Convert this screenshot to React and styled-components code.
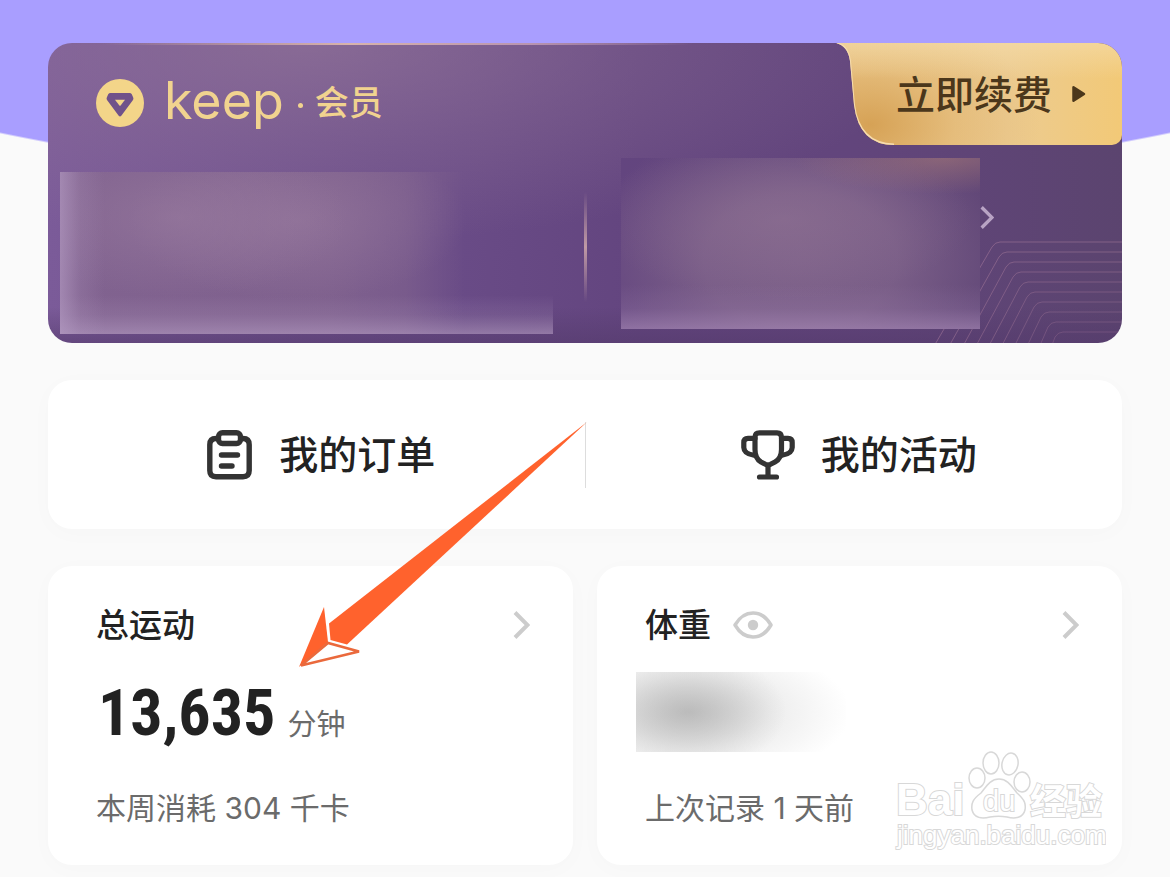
import styled, { createGlobalStyle } from "styled-components"

const COLORS = {
    page: "#fafafa",
    sky: "#a99eff",
    purple: "#63457f",
    gold: "#f1d38f",
    ink: "#222222",
    icon: "#333333",
    grey: "#6b6b6b",
    light_grey: "#cccccc",
    orange: "#ff622d",
}

const GlobalStyle = createGlobalStyle`
* {
    box-sizing: border-box;
}
body {
    margin: 0;
    background: ${COLORS.page};
    color: ${COLORS.ink};
    font-family: Inter, "Noto Sans CJK SC", sans-serif;
}
`

const MemberBadge = () => (
    <svg width="48" height="48" viewBox="0 0 48 48" aria-hidden="true">
        <circle cx="24" cy="24" r="24" fill="#f3d589" />
        <path
            d="M14.500 14H33.500Q35 14 35.800 15.200L37.200 18.500Q37.800 19.800 37 21L25.300 36.800Q24 38.400 22.700 36.800L11 21Q10.200 19.800 10.800 18.500L12.200 15.200Q13 14 14.500 14Z"
            fill="#70528a"
        />
        <path d="M19 20.800H29L24.600 26.500Q24 27.200 23.400 26.500Z" fill="#f3d589" />
    </svg>
)

const ChevronIcon = ({ width = 17, height = 28, color = COLORS.light_grey, stroke = 4 }) => (
    <svg width={width} height={height} viewBox="0 0 17 28" aria-hidden="true">
        <path d="M2 1.500L14.500 14L2 26.500" fill="none" stroke={color} strokeWidth={stroke} />
    </svg>
)

const OrderIcon = () => (
    <svg width="46" height="50" viewBox="0 0 46 50" fill="none" stroke={COLORS.icon} strokeWidth="5.400" strokeLinecap="round" strokeLinejoin="round" aria-hidden="true">
        <path d="M10.500 8.500H9Q2.800 8.500 2.800 14.700V40.500Q2.800 46.700 9 46.700H36Q42.200 46.700 42.200 40.500V14.700Q42.200 8.500 36 8.500H34.500" />
        <rect x="11.500" y="2.800" width="22" height="10.700" rx="4" />
        <path d="M14.500 25H30.500M14.500 36H25" />
    </svg>
)

const TrophyIcon = () => (
    <svg width="54" height="50" viewBox="0 0 54 50" fill="none" stroke={COLORS.icon} strokeWidth="5.200" strokeLinecap="round" strokeLinejoin="round" aria-hidden="true">
        <path d="M18.500 2.800H36Q40.500 2.800 40.500 7.500V19.500Q40.500 28.500 34 32L29.500 34.300Q27 35.300 24.500 34.300L20 32Q14 28.500 14 19.500V7.500Q14 2.800 18.500 2.800Z" />
        <path d="M14 8.300H7Q2.800 8.300 2.800 12.500V17.500Q3 23.800 13 25.300M40.500 8.300H47Q51.200 8.300 51.200 12.500V17.500Q51 23.800 41 25.300M27 36V46M18.500 47H35.500" />
    </svg>
)

const EyeIcon = () => (
    <svg width="40" height="28" viewBox="0 0 40 28" aria-hidden="true">
        <path d="M2 14Q9 2 20 2T38 14Q31 26 20 26T2 14Z" fill="none" stroke={COLORS.light_grey} strokeWidth="3.500" strokeLinejoin="round" />
        <circle cx="20" cy="14" r="5.200" fill={COLORS.light_grey} />
    </svg>
)

const PlayIcon = () => (
    <svg width="14" height="18" viewBox="0 0 14 18" aria-hidden="true">
        <path d="M1.500 2.200V15.800L12 9Z" fill="#4b371b" stroke="#4b371b" strokeWidth="2.500" strokeLinejoin="round" />
    </svg>
)

const lineRows = [0, 1, 2, 3, 4, 5, 6, 7, 8, 9]

const CardLines = () => (
    <LinesSvg width="192" height="102" viewBox="0 0 192 102" fill="none" stroke="#a5799a" strokeWidth="1" aria-hidden="true">
        {lineRows.map((row) => (
            <path
                key={row}
                opacity={0.55 - row * 0.025}
                d={`M192 ${1 + row * 10}H${70 + row * 7}q-5 0 -8 5L${row * 13} ${row < 2 ? 112 + row * 4 : 118}`}
            />
        ))}
    </LinesSvg>
)

const TabEdge = () => (
    <EdgeSvg width="70" height="102" viewBox="0 0 70 102" fill="none" aria-hidden="true">
        <path d="M1 0Q12 3 14 18L18 62Q23 101 58 101.500" stroke="#f6dcae" strokeWidth="2" />
    </EdgeSvg>
)

const PointerArrow = () => (
    <ArrowSvg width="300" height="255" viewBox="290 415 300 255" aria-hidden="true">
        <path d="M587 422L329 623.500L330.500 640L347 644.500Z" fill={COLORS.orange} />
        <path d="M324 607L299 667L328 642Z" fill={COLORS.orange} />
        <path d="M328 643L301 665.500L359 651.500Z" fill="#ffffff" stroke="#ea693c" strokeWidth="2.500" />
    </ArrowSvg>
)

const Watermark = () => (
    <WatermarkSvg width="212" height="104" viewBox="0 0 212 104" aria-hidden="true">
        <g fill="#ffffff" stroke="#d8d8d8" strokeWidth="1.500">
            <ellipse cx="83" cy="28" rx="8" ry="10" />
            <ellipse cx="97" cy="13" rx="8" ry="11" />
            <ellipse cx="116" cy="14" rx="8" ry="11" transform="rotate(12 116 14)" />
            <ellipse cx="128" cy="32" rx="8" ry="10" />
            <path d="M105 29C114 29 118 37 123 43C131 50 132 54 131 60C129 68 121 69 113 67C107 66 102 66 96 67C88 69 80 68 78 60C77 53 79 49 87 43C92 37 96 29 105 29Z" />
        </g>
        <g fill="#ffffff" stroke="#d8d8d8" strokeWidth="2" paintOrder="stroke" fontFamily="'Liberation Sans', 'Noto Sans CJK SC', sans-serif">
            <text x="2" y="65" fontSize="44" fontWeight="700">Bai</text>
            <text x="89" y="61" fontSize="29">du</text>
            <text x="136" y="65" fontSize="36" fontWeight="700">经验</text>
            <text x="3" y="94" fontSize="26">jingyan.baidu.com</text>
        </g>
    </WatermarkSvg>
)

const StatCard = ({ title, extra, children, note }) => (
    <StatContainer>
        <StatHeader>
            <StatTitle>{title}</StatTitle>
            {extra}
            <StatLink href="#" aria-label={title}>
                <ChevronIcon />
            </StatLink>
        </StatHeader>
        <StatValue>{children}</StatValue>
        <StatNote>{note}</StatNote>
    </StatContainer>
)

const App = () => {
    return (
        <Page>
            <GlobalStyle />
            <MemberCard>
                <CardLines />
                <MemberHeader>
                    <Brand>
                        <MemberBadge />
                        <BrandName>keep</BrandName>
                        <BrandDot />
                        <BrandTag>会员</BrandTag>
                    </Brand>
                    <RenewButton type="button">
                        <TabEdge />
                        <RenewText>立即续费</RenewText>
                        <PlayIcon />
                    </RenewButton>
                </MemberHeader>
                <MemberBody>
                    <LeftHaze />
                    <MemberDivider />
                    <RightHaze />
                    <MemberLink href="#" aria-label="会员">
                        <ChevronIcon width={14} height={23} color="#b8a3c4" stroke={4} />
                    </MemberLink>
                </MemberBody>
            </MemberCard>

            <Shortcuts>
                <Shortcut href="#">
                    <OrderIcon />
                    我的订单
                </Shortcut>
                <ShortcutDivider />
                <Shortcut href="#">
                    <TrophyIcon />
                    我的活动
                </Shortcut>
            </Shortcuts>

            <Stats>
                <StatCard title="总运动" note="本周消耗 304 千卡">
                    <BigNumber>13,635</BigNumber>
                    <Unit>分钟</Unit>
                </StatCard>
                <StatCard
                    title="体重"
                    note="上次记录 1 天前"
                    extra={
                        <EyeButton type="button" aria-label="体重">
                            <EyeIcon />
                        </EyeButton>
                    }
                >
                    <WeightHaze />
                </StatCard>
            </Stats>

            <PointerArrow />
            <Watermark />
        </Page>
    )
}

export default App

const Page = styled.main`
position: relative;
display: flex;
flex-direction: column;
gap: 37px;
min-height: 100vh;
padding: 43px 48px 12px;
background: radial-gradient(circle at 50% -2733px, ${COLORS.sky} 2924px, ${COLORS.page} 2926px);
`
const MemberCard = styled.section`
position: relative;
overflow: hidden;
border-radius: 24px;
background:
    linear-gradient(90deg, transparent 5%, #d8b3ab 28%, #b894b0 45%, transparent 60%) top / 100% 2px no-repeat,
    radial-gradient(ellipse 620px 200px at 24% 0, rgba(145, 115, 152, 0.75), rgba(145, 115, 152, 0.35) 50%, transparent),
    linear-gradient(0deg, rgba(84, 58, 108, 0.6), transparent 12%),
    linear-gradient(90deg, #7b5b99 0%, #6c4e8a 30%, ${COLORS.purple} 55%, #62457c 75%, #5b446f 100%);
`
const LinesSvg = styled.svg`
position: absolute;
right: 0;
bottom: 0;
`
const MemberHeader = styled.header`
display: flex;
justify-content: space-between;
align-items: flex-start;
`
const Brand = styled.div`
display: flex;
align-items: center;
height: 48px;
margin: 36px 0 0 48px;
color: ${COLORS.gold};
`
const BrandName = styled.span`
margin-left: 20px;
padding-bottom: 4px;
font-size: 52px;
font-weight: 400;
line-height: 48px;
`
const BrandDot = styled.i`
width: 5px;
height: 5px;
margin: 4px 12px 0 14px;
border-radius: 50%;
background: ${COLORS.gold};
`
const BrandTag = styled.span`
font-size: 34px;
font-weight: 500;
line-height: 48px;
`
const RenewButton = styled.button`
position: relative;
display: flex;
align-items: center;
justify-content: flex-end;
gap: 20px;
width: 286px;
height: 102px;
padding: 0 36px 0 0;
border: 0;
border-radius: 0 0 10px 0;
clip-path: path("M0 0Q12 3 14 18L18 62Q23 102 58 102H286V0Z");
background:
    linear-gradient(180deg, rgba(246, 222, 172, 0.6), transparent 35%),
    radial-gradient(ellipse 170px 110px at 12% 80%, rgba(212, 158, 80, 0.9), rgba(220, 170, 96, 0.4) 50%, transparent),
    linear-gradient(90deg, #e9c588, #eccb91 60%, #f2c977);
color: #4b371b;
font-family: inherit;
font-size: 39px;
font-weight: 500;
cursor: pointer;
`
const RenewText = styled.span`
padding-bottom: 4px;
`
const EdgeSvg = styled.svg`
position: absolute;
left: 0;
top: 0;
`
const MemberBody = styled.div`
position: relative;
display: grid;
grid-template-columns: 493fr 68px 359fr 142px;
align-items: end;
height: 198px;
padding: 0 0 9px 12px;
`
const LeftHaze = styled.div`
height: 162px;
background:
    linear-gradient(90deg, rgba(180, 155, 195, 0.65), rgba(180, 155, 195, 0.2) 4%, transparent 9%),
    linear-gradient(0deg, rgba(175, 150, 190, 0.65), rgba(175, 150, 190, 0.2) 12%, transparent 24%),
    radial-gradient(ellipse 170px 80px at 24% 28%, rgba(155, 125, 160, 0.55), transparent),
    radial-gradient(ellipse 170px 80px at 48% 30%, rgba(155, 125, 160, 0.55), transparent),
    linear-gradient(90deg, rgba(130, 100, 142, 0.85) 55%, rgba(130, 100, 142, 0.6) 70%, transparent 82%);
`
const MemberDivider = styled.span`
justify-self: center;
align-self: center;
width: 3px;
height: 110px;
margin: 14px 4px 0 0;
background: linear-gradient(180deg, transparent, #c09aa5 50%, transparent);
`
const RightHaze = styled.div`
height: 171px;
margin-bottom: 5px;
background:
    linear-gradient(0deg, rgba(165, 135, 180, 0.65), rgba(165, 135, 180, 0.2) 12%, transparent 26%),
    radial-gradient(ellipse 150px 36px at 90% 0, rgba(165, 120, 120, 0.6), transparent),
    radial-gradient(ellipse 190px 80px at 45% 36%, rgba(150, 120, 150, 0.45), transparent),
    radial-gradient(ellipse 215px 150px at 50% 60%, rgba(130, 102, 140, 0.85), rgba(130, 102, 140, 0.75) 45%, transparent),
    linear-gradient(90deg, ${COLORS.purple}, #5f4576);
`
const MemberLink = styled.a`
align-self: start;
height: 23px;
margin-top: 61px;
line-height: 0;
`
const Shortcuts = styled.nav`
display: grid;
grid-template-columns: 1fr 1px 1fr;
align-items: center;
height: 149px;
border-radius: 24px;
background: #ffffff;
box-shadow: 0 4px 24px rgba(0, 0, 0, 0.02);
`
const Shortcut = styled.a`
display: flex;
align-items: center;
justify-content: center;
gap: 26px;
padding-left: 10px;
color: ${COLORS.ink};
font-size: 39px;
font-weight: 500;
line-height: 60px;
text-decoration: none;
`
const ShortcutDivider = styled.span`
height: 66px;
background: #dddddd;
`
const Stats = styled.section`
display: grid;
grid-template-columns: 1fr 1fr;
gap: 24px;
`
const StatContainer = styled.article`
display: flex;
flex-direction: column;
padding: 39px 43px 37px 48px;
border-radius: 24px;
background: #ffffff;
box-shadow: 0 4px 24px rgba(0, 0, 0, 0.02);
`
const StatHeader = styled.header`
display: flex;
align-items: center;
height: 40px;
`
const StatTitle = styled.h2`
margin: 0;
font-size: 33px;
font-weight: 500;
line-height: 40px;
`
const EyeButton = styled.button`
height: 28px;
margin-left: 22px;
padding: 0;
border: 0;
background: none;
line-height: 0;
cursor: pointer;
`
const StatLink = styled.a`
margin-left: auto;
line-height: 0;
`
const StatValue = styled.div`
display: flex;
align-items: baseline;
gap: 12px;
height: 80px;
margin: 27px 0 36px;
`
const BigNumber = styled.strong`
padding-left: 2px;
font-family: "Roboto Condensed", "Liberation Sans Narrow", sans-serif;
font-size: 64px;
font-weight: 700;
line-height: 84px;
`
const Unit = styled.span`
color: ${COLORS.grey};
font-size: 29px;
font-weight: 400;
`
const WeightHaze = styled.div`
width: 210px;
height: 80px;
margin-left: -9px;
background:
    radial-gradient(ellipse 100px 60px at 24% 50%, rgba(165, 165, 165, 0.5), transparent),
    radial-gradient(ellipse 160px 72px at 26% 50%, rgba(190, 190, 190, 0.7), rgba(210, 210, 210, 0.4) 50%, transparent);
`
const StatNote = styled.p`
margin: 0;
color: ${COLORS.grey};
font-size: 30px;
font-weight: 400;
line-height: 40px;
`
const ArrowSvg = styled.svg`
position: absolute;
left: 290px;
top: 415px;
pointer-events: none;
`
const WatermarkSvg = styled.svg`
position: absolute;
right: 64px;
top: 750px;
pointer-events: none;
`
